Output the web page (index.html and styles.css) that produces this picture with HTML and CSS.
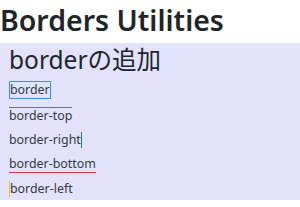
FILE: index.html
```html
<!DOCTYPE html>
<html lang="ja">
<head>
  <meta charset="UTF-8" />
  <title>Borders Utilities</title>
  <meta name="viewport" content="width=device-width, initial-scale=1.0" />
  <link rel="stylesheet" href="styles.css">
</head>
<body>

<h1 class="page-title">Borders Utilities</h1>

<section class="demo">
  <h2>borderの追加</h2>
  <div class="item"><span class="b-all">border</span></div>
  <div class="item"><span class="b-top">border-top</span></div>
  <div class="item"><span class="b-right">border-right</span></div>
  <div class="item"><span class="b-bottom">border-bottom</span></div>
  <div class="item"><span class="b-left">border-left</span></div>
</section>

</body>
</html>
```

FILE: styles.css
```css
body {
  margin: 0;
  font-family: 'Noto Sans', 'Noto Sans CJK JP', sans-serif;
  background-color: #fff;
  color: #212529;
}
.page-title {
  margin: 0;
  padding: 2px 0 5px 0;
  font-size: 28.5px;
  font-weight: 600;
  line-height: 36px;
}
.demo {
  background-color: #e2e2fd;
  padding: 2px 9px 0 9px;
  height: 155px;
}
h2 {
  margin: 0 0 6px 0;
  font-size: 24.5px;
  font-weight: 400;
  line-height: 30px;
}
.item {
  margin-bottom: 8px;
  font-size: 12.4px;
  line-height: 16px;
  color: #343a40;
}
.item span {
  display: inline-block;
}
.b-all {
  border: 1px solid #3d8bfd;
}
.b-top {
  border-top: 1px solid #6c757d;
}
.b-right {
  border-right: 1px solid #198754;
}
.b-bottom {
  border-bottom: 1px solid #dc3545;
}
.b-left {
  border-left: 1px solid #ffc107;
}
```
